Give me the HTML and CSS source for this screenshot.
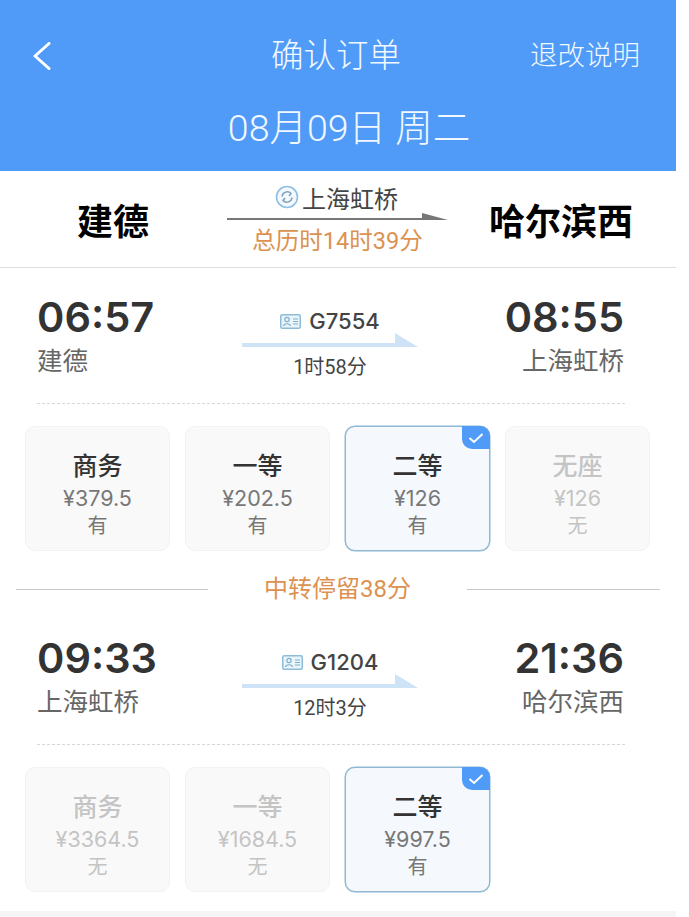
FILE: index.html
```html
<!DOCTYPE html>
<html lang="zh-CN">
<head>
  <meta charset="UTF-8" />
  <meta name="viewport" content="width=device-width, initial-scale=1" />
  <title>确认订单</title>
  <link rel="stylesheet" href="styles.css">
</head>
<body>
<div class="page">

  <header class="header">
    <div class="nav">
      <svg class="back" width="19" height="28" viewBox="0 0 19 28"><path d="M17 1.5 3 14l14 12.5" fill="none" stroke="#fff" stroke-width="3" stroke-linecap="round" stroke-linejoin="round"/></svg>
      <div class="nav-title">确认订单</div>
      <div class="nav-link">退改说明</div>
    </div>
    <div class="date">08月09日 周二</div>
  </header>

  <section class="route">
    <div class="route-from">建德</div>
    <div class="route-mid">
      <div class="route-via">
        <svg width="24" height="24" viewBox="0 0 24 24">
          <circle cx="12" cy="12" r="10.5" fill="#f2f8fd" stroke="#8fc0e4" stroke-width="1.6"/>
          <path d="M7 11.500A5.200 5.200 0 0 1 16 8.500L14 11M17 12.500A5.200 5.200 0 0 1 8 15.500L10 13" fill="none" stroke="#7f9fb8" stroke-width="1.500"/>
        </svg>
        <span>上海虹桥</span>
      </div>
      <svg class="route-arrow" width="221" height="9" viewBox="0 0 221 9"><path d="M0 5h195V0l26 7H0z" fill="#777"/></svg>
      <div class="route-total">总历时14时39分</div>
    </div>
    <div class="route-to">哈尔滨西</div>
  </section>

  <section class="train">
    <div class="train-row">
      <div>
        <div class="time">06:57</div>
        <div class="station">建德</div>
      </div>
      <div class="train-mid">
        <div class="train-no">
          <svg width="21" height="15" viewBox="0 0 21 15">
            <rect x=".75" y=".75" width="19.5" height="13.5" rx="1.5" fill="#e9f4fb" stroke="#8dbdd8" stroke-width="1.5"/>
            <circle cx="7" cy="5.5" r="2.2" fill="none" stroke="#7fb0cc" stroke-width="1.2"/>
            <path d="M3.5 12c.4-3 6.600-3 7 0M13 5h5M13 7.500h5M13 10h5" fill="none" stroke="#7fb0cc" stroke-width="1.200"/>
          </svg>
          <span>G7554</span>
        </div>
        <svg class="train-arrow" width="176" height="15" viewBox="0 0 176 15"><path d="M0 10h153V0l23 14H0z" fill="#cfe3f6"/></svg>
        <div class="duration">1时58分</div>
      </div>
      <div class="train-end">
        <div class="time">08:55</div>
        <div class="station">上海虹桥</div>
      </div>
    </div>
    <div class="dash"></div>
    <div class="seats">
      <div class="seat"><div class="seat-name">商务</div><div class="seat-price">¥379.5</div><div class="seat-left">有</div></div>
      <div class="seat"><div class="seat-name">一等</div><div class="seat-price">¥202.5</div><div class="seat-left">有</div></div>
      <div class="seat seat-on">
        <div class="seat-name">二等</div><div class="seat-price">¥126</div><div class="seat-left">有</div>
        <div class="seat-check"><svg width="16" height="12" viewBox="0 0 16 12"><path d="M1.500 6 6 10 14.500 2" fill="none" stroke="#fff" stroke-width="2"/></svg></div>
      </div>
      <div class="seat seat-off"><div class="seat-name">无座</div><div class="seat-price">¥126</div><div class="seat-left">无</div></div>
    </div>
  </section>

  <div class="transfer">
    <div class="transfer-line"></div>
    <div class="transfer-text">中转停留38分</div>
    <div class="transfer-line"></div>
  </div>

  <section class="train">
    <div class="train-row">
      <div>
        <div class="time">09:33</div>
        <div class="station">上海虹桥</div>
      </div>
      <div class="train-mid">
        <div class="train-no">
          <svg width="21" height="15" viewBox="0 0 21 15">
            <rect x=".75" y=".75" width="19.5" height="13.5" rx="1.5" fill="#e9f4fb" stroke="#8dbdd8" stroke-width="1.5"/>
            <circle cx="7" cy="5.5" r="2.2" fill="none" stroke="#7fb0cc" stroke-width="1.2"/>
            <path d="M3.5 12c.4-3 6.600-3 7 0M13 5h5M13 7.500h5M13 10h5" fill="none" stroke="#7fb0cc" stroke-width="1.200"/>
          </svg>
          <span>G1204</span>
        </div>
        <svg class="train-arrow" width="176" height="15" viewBox="0 0 176 15"><path d="M0 10h153V0l23 14H0z" fill="#cfe3f6"/></svg>
        <div class="duration">12时3分</div>
      </div>
      <div class="train-end">
        <div class="time">21:36</div>
        <div class="station">哈尔滨西</div>
      </div>
    </div>
    <div class="dash"></div>
    <div class="seats">
      <div class="seat seat-off"><div class="seat-name">商务</div><div class="seat-price">¥3364.5</div><div class="seat-left">无</div></div>
      <div class="seat seat-off"><div class="seat-name">一等</div><div class="seat-price">¥1684.5</div><div class="seat-left">无</div></div>
      <div class="seat seat-on">
        <div class="seat-name">二等</div><div class="seat-price">¥997.5</div><div class="seat-left">有</div>
        <div class="seat-check"><svg width="16" height="12" viewBox="0 0 16 12"><path d="M1.500 6 6 10 14.500 2" fill="none" stroke="#fff" stroke-width="2"/></svg></div>
      </div>
    </div>
  </section>

  <div class="bottom"></div>
</div>
</body>
</html>
```

FILE: styles.css
```css
* {
  box-sizing: border-box;
}
body {
  margin: 0;
  background: #fff;
  font-family: Roboto, "Noto Sans CJK SC", sans-serif;
  color: #333;
}
.page {
  width: 676px;
  height: 917px;
  overflow: hidden;
  background: #fff;
}

/* top bar */
.header {
  height: 171px;
  background: #4f9bf7;
  color: #f2f8ff;
  padding-top: 31px;
}
.nav {
  display: grid;
  grid-template-columns: 1fr auto 1fr;
  align-items: center;
  height: 50px;
  padding: 0 36px 0 32px;
}
.nav-title {
  font-size: 32.500px;
  font-weight: 300;
  line-height: 50px;
}
.nav-link {
  justify-self: end;
  font-size: 27.500px;
  font-weight: 300;
  line-height: 50px;
}
.date {
  margin-top: 22px;
  padding-left: 22px;
  text-align: center;
  font-size: 37.500px;
  font-weight: 300;
  line-height: 50px;
}

/* route summary */
.route {
  display: grid;
  grid-template-columns: 227px 221px 1fr;
  height: 97px;
  border-bottom: 1px solid #ddd;
}
.route-from, .route-to {
  font-size: 36px;
  font-weight: 700;
  color: #000;
  line-height: 50px;
  margin-top: 27px;
}
.route-from {
  padding-left: 77px;
}
.route-to {
  padding-left: 41px;
}
.route-via {
  display: flex;
  align-items: center;
  justify-content: center;
  gap: 3px;
  height: 30px;
  margin-top: 11px;
  padding-right: 2px;
  font-size: 24px;
  color: #444;
}
.route-arrow {
  display: block;
  margin-top: 1px;
}
.route-total {
  margin-top: 4px;
  text-align: center;
  font-size: 23.500px;
  line-height: 30px;
  color: #dc9150;
}

/* train */
.train-row {
  display: grid;
  grid-template-columns: 205px 176px 1fr;
  height: 135px;
  padding: 27px 52px 0 37px;
}
.train-end {
  text-align: right;
}
.time {
  font-family: Inter, sans-serif;
  font-size: 41.500px;
  font-weight: 600;
  line-height: 44px;
  color: #333;
}
.station {
  margin-top: 5px;
  font-size: 25.500px;
  line-height: 34px;
  color: #666;
}
.train-mid {
  padding-top: 12px;
}
.train-no {
  display: flex;
  align-items: center;
  justify-content: center;
  gap: 8px;
  height: 28px;
  font-family: Inter, sans-serif;
  font-size: 22px;
  font-weight: 500;
  color: #444;
}
.train-arrow {
  display: block;
  margin-top: -2px;
}
.duration {
  margin-top: 6px;
  text-align: center;
  font-size: 20px;
  line-height: 26px;
  color: #444;
}
.dash {
  height: 0;
  margin: 0 51px 0 37px;
  border-top: 1px dashed #d8d8d8;
}

/* seat cards */
.seats {
  display: grid;
  grid-template-columns: repeat(4, 145px);
  gap: 15px;
  margin-top: 22px;
  padding-left: 25px;
}
.seat {
  position: relative;
  height: 125px;
  padding-top: 23px;
  text-align: center;
  background: #f9f9f9;
  border: 1px solid #f2f2f2;
  border-radius: 10px;
  color: #777;
}
.seat-name {
  font-size: 25px;
  font-weight: 500;
  line-height: 34px;
  margin-bottom: 1px;
  color: #333;
}
.seat-price {
  font-family: Inter, sans-serif;
  font-size: 21.500px;
  line-height: 27px;
}
.seat-left {
  font-size: 20px;
  line-height: 28px;
}
.seat-off .seat-name, .seat-off .seat-price, .seat-off .seat-left {
  color: #c4c4c4;
}
.seat-on {
  background: #f5f9fe;
  border: 1px solid #8fb9d2;
  box-shadow: 0 0 0 .5px #8fb9d2;
}
.seat-check {
  position: absolute;
  top: -1px;
  right: -1px;
  display: flex;
  align-items: center;
  justify-content: center;
  width: 28px;
  height: 23px;
  background: #4f9bf7;
  border-radius: 0 10px 0 10px;
}

/* transfer divider */
.transfer {
  display: grid;
  grid-template-columns: 192px 1fr 193px;
  align-items: center;
  height: 28px;
  margin: 24px 16px 6px;
}
.transfer-line {
  height: 1px;
  background: #c8c8c8;
}
.transfer-text {
  text-align: center;
  font-size: 24px;
  line-height: 28px;
  color: #dc9150;
}

.bottom {
  height: 7px;
  margin-top: 19px;
  background: #f5f5f5;
}
```
